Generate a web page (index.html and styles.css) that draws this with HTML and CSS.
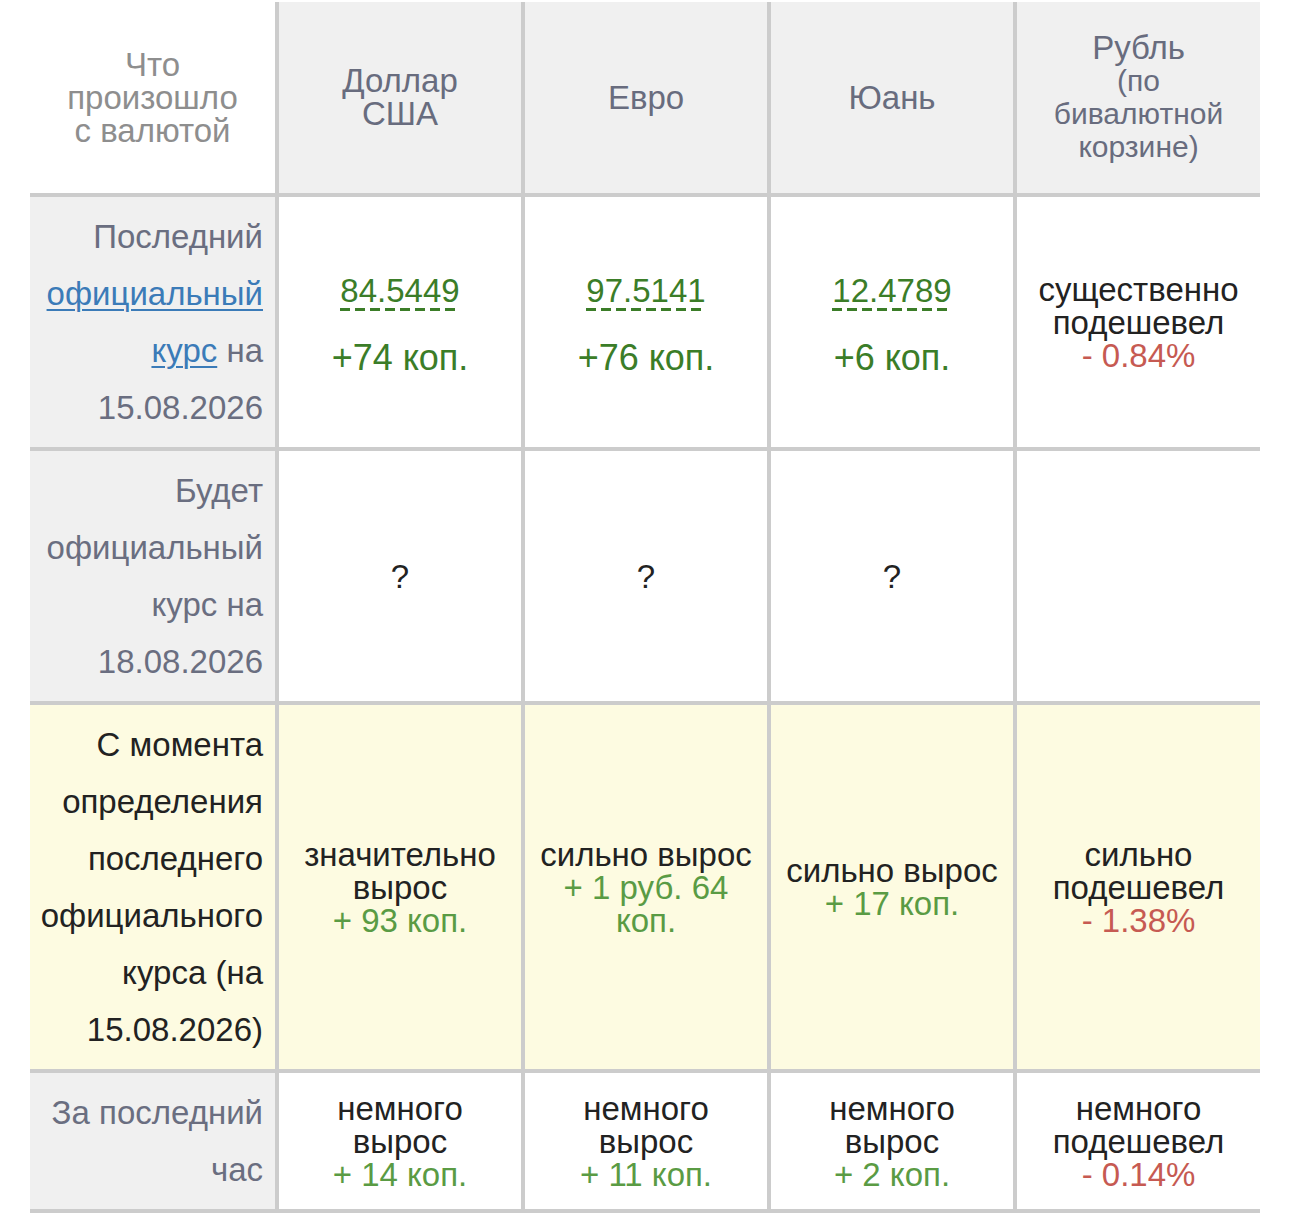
FILE: index.html
```html
<!DOCTYPE html>
<html lang="ru">
<head>
<meta charset="utf-8">
<title>Курсы валют</title>
<link rel="stylesheet" href="styles.css">
</head>
<body>
<table class="rates">
  <colgroup>
    <col class="col-label">
    <col class="col-cur">
    <col class="col-cur">
    <col class="col-cur">
    <col class="col-last">
  </colgroup>
  <thead>
    <tr>
      <th class="corner">Что произошло с&nbsp;валютой</th>
      <th>Доллар<br>США</th>
      <th>Евро</th>
      <th>Юань</th>
      <th class="last">Рубль<span class="sub">(по<br>бивалютной<br>корзине)</span></th>
    </tr>
  </thead>
  <tbody>
    <tr>
      <td class="label">Последний <a href="#">официальный</a> <a href="#">курс</a> на 15.08.2026</td>
      <td><div class="official"><span class="rate">84.5449</span><span class="diff">+74 коп.</span></div></td>
      <td><div class="official"><span class="rate">97.5141</span><span class="diff">+76 коп.</span></div></td>
      <td><div class="official"><span class="rate">12.4789</span><span class="diff">+6 коп.</span></div></td>
      <td class="last">существенно подешевел<br><span class="down">- 0.84%</span></td>
    </tr>
    <tr>
      <td class="label">Будет официальный курс на 18.08.2026</td>
      <td>?</td>
      <td>?</td>
      <td>?</td>
      <td class="last"></td>
    </tr>
    <tr class="hl">
      <td class="label">С момента определения последнего официального курса (на 15.08.2026)</td>
      <td>значительно вырос<br><span class="up">+ 93 коп.</span></td>
      <td>сильно вырос<br><span class="up">+ 1 руб. 64 коп.</span></td>
      <td>сильно вырос<br><span class="up">+ 17 коп.</span></td>
      <td class="last">сильно подешевел<br><span class="down">- 1.38%</span></td>
    </tr>
    <tr>
      <td class="label">За последний час</td>
      <td>немного вырос<br><span class="up">+ 14 коп.</span></td>
      <td>немного вырос<br><span class="up">+ 11 коп.</span></td>
      <td>немного вырос<br><span class="up">+ 2 коп.</span></td>
      <td class="last">немного подешевел<br><span class="down">- 0.14%</span></td>
    </tr>
  </tbody>
</table>
</body>
</html>
```
FILE: styles.css
```css
html, body {
  margin: 0;
  padding: 0;
  background: #ffffff;
}

body {
  font-family: "Liberation Sans", Arial, sans-serif;
  color: #222222;
}

.rates {
  margin: 2px 0 0 30px;
  width: 1230px;
  table-layout: fixed;
  border-collapse: separate;
  border-spacing: 0;
  font-size: 33px;
  line-height: 33px;
}

.col-label { width: 249px; }
.col-cur { width: 246px; }
.col-last { width: 243px; }

.rates th,
.rates td {
  box-sizing: border-box;
  padding: 11px 10px;
  border-right: 4px solid #cccccc;
  border-bottom: 4px solid #cccccc;
  text-align: center;
  vertical-align: middle;
  font-weight: normal;
}

.rates th.last,
.rates td.last {
  border-right: none;
}

.rates thead th {
  padding: 29px 10px 30px;
  background: #f0f0f0;
  color: #686c7e;
}

.rates thead th.corner {
  background: #ffffff;
  color: #8e8e8e;
  padding-left: 20px;
  padding-right: 20px;
}

.sub {
  display: block;
  font-size: 30px;
  line-height: 33px;
}

.rates td.label {
  background: #f0f0f0;
  color: #6a6e80;
  text-align: right;
  line-height: 57px;
  padding: 11px 12px 11px 6px;
}

.label a {
  color: #3b7bb8;
  text-decoration: underline;
  text-underline-offset: 4px;
  text-decoration-thickness: 2px;
}

.official {
  padding-top: 5px;
}

.rate {
  display: inline-block;
  color: #3b7d28;
  padding-bottom: 4px;
  background-image: repeating-linear-gradient(to right, #3b7d28 0, #3b7d28 10px, transparent 10px, transparent 15px);
  background-size: 100% 3px;
  background-position: left bottom;
  background-repeat: no-repeat;
}

.diff {
  display: block;
  margin-top: 29px;
  font-size: 36px;
  line-height: 36px;
  color: #3b7d28;
}

.up {
  color: #5a9b44;
}

.down {
  color: #c65a52;
}

.rates tr.hl td,
.rates tr.hl td.label {
  background: #fdfbe1;
  color: #222222;
}
```
